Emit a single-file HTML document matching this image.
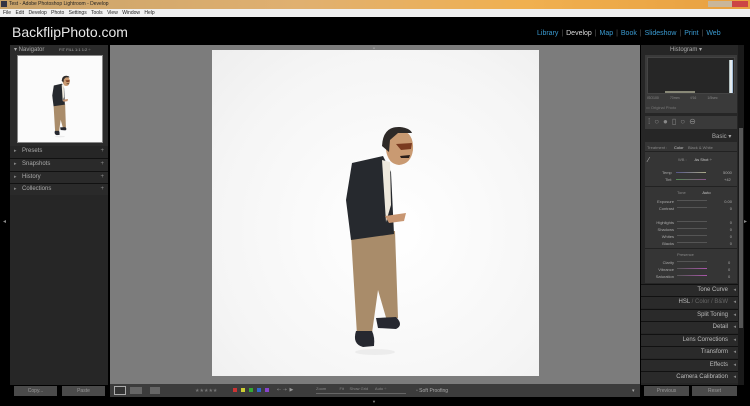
<!DOCTYPE html>
<html><head><style>
*{margin:0;padding:0;box-sizing:border-box}
body{width:750px;height:406px;overflow:hidden;background:#000;font-family:"Liberation Sans",sans-serif;position:relative}
.a{position:absolute}
.t{font-size:5px;color:#aaa;white-space:nowrap}
.rh{position:absolute;left:641px;width:97px;height:12px;background:#2a2a2a;border-top:1px solid #111;font-size:6px;color:#bbb;text-align:right;padding-right:10px;line-height:11px}
.rh:after{content:"◂";position:absolute;right:2px;color:#888;font-size:5px}
.lh{position:absolute;left:10px;width:98px;height:12px;background:#2a2a2a;border-top:1px solid #111;font-size:6px;color:#aaa;line-height:11px;padding-left:12px}
.lh:before{content:"▸";position:absolute;left:4px;color:#888;font-size:5px}
.lh:after{content:"+";position:absolute;right:4px;color:#888;font-size:6px}
.sl{position:absolute;height:1px;background:#555;width:30px}
</style></head><body>
<svg width="0" height="0" style="position:absolute"><defs>
<g id="fig">
<ellipse cx="375" cy="352" rx="20" ry="3" fill="#ececec"/>
<path d="M351 235 L395 231 L398 318 L387 321 L378 290 L372 333 L357 335 Z" fill="#a98c6a"/>
<path d="M352 163 L383 156 L391 172 L394 234 L351 240 L346 200 Z" fill="#26292e"/>
<path d="M382 160 L390 162 L391 205 L386 222 Z" fill="#eee9dd"/>
<path d="M385 216 L406 213 L404 221 L389 223 Z" fill="#c89672"/>
<path d="M386 150 Q387 130 400 130 Q414 132 413 150 Q411 164 399 165 Q388 164 386 150 Z" fill="#c99a72"/>
<path d="M382 146 Q383 126 400 127 Q410 128 412 133 L398 133 L390 140 L389 152 Z" fill="#2e2a28"/>
<path d="M396 144 L412 143 L411 149 L401 150 Z" fill="#7a3a20"/>
<path d="M400 156 L410 155 L409 158 L401 158 Z" fill="#2a1f1a"/>
<path d="M356 331 Q352 344 363 347 L374 346 Q375 337 372 331 Z" fill="#262830"/>
<path d="M376 318 L396 317 Q404 325 396 329 L378 328 Z" fill="#262830"/>
</g></defs></svg>
<div class="a" style="left:0;top:0;width:750px;height:9px;background:linear-gradient(90deg,#c9a36a,#e0b070 40%,#f0b050 70%,#e8a040)"></div>
<div class="a t" style="left:9px;top:1px;color:#222;font-size:5px">Test - Adobe Photoshop Lightroom - Develop</div>
<div class="a" style="left:1px;top:1px;width:6px;height:6px;background:#334"></div>
<div class="a" style="left:708px;top:1px;width:40px;height:6px;background:linear-gradient(90deg,#c9b69a 60%,#c44 60%)"></div>
<div class="a" style="left:0;top:9px;width:750px;height:8px;background:#f0f0f0"></div>
<div class="a t" style="left:3px;top:10px;color:#222;word-spacing:3px">File Edit Develop Photo Settings Tools View Window Help</div>
<div class="a" style="left:0;top:17px;width:750px;height:28px;background:#000"></div>
<div class="a" style="left:12px;top:24px;font-size:14px;color:#e8e8e8">BackflipPhoto.com</div>
<div class="a" style="left:537px;top:30px;font-size:7px;color:#3a9ad0;white-space:nowrap;word-spacing:1px">Library <span style="color:#555">|</span> <span style="color:#ddd">Develop</span> <span style="color:#555">|</span> Map <span style="color:#555">|</span> Book <span style="color:#555">|</span> Slideshow <span style="color:#555">|</span> Print <span style="color:#555">|</span> Web</div>

<div class="a" style="left:10px;top:45px;width:98px;height:340px;background:#2b2b2b"></div>
<div class="a t" style="left:14px;top:46px;font-size:6px">▾ Navigator <span style="margin-left:13px;font-size:4px">FIT FILL 1:1 1:2 ÷</span></div>
<div class="a" style="left:17px;top:55px;width:86px;height:88px;background:#fbfbfb;border:1px solid #888"></div>
<svg class="a" style="left:17px;top:55px" width="86" height="88" viewBox="212 50 327 326" preserveAspectRatio="none"><use href="#fig"/></svg>
<div class="lh" style="top:146px;border:none;background:#262626">Presets</div>
<div class="lh" style="top:158px">Snapshots</div>
<div class="lh" style="top:171px">History</div>
<div class="lh" style="top:183px">Collections</div>
<div class="a" style="left:10px;top:195px;width:98px;height:190px;background:#262626"></div>
<div class="a" style="left:3px;top:218px;color:#888;font-size:6px">◂</div>
<div class="a" style="left:14px;top:386px;width:43px;height:10px;background:#4a4a4a;font-size:5px;color:#999;text-align:center;line-height:10px">Copy...</div>
<div class="a" style="left:62px;top:386px;width:43px;height:10px;background:#4a4a4a;font-size:5px;color:#999;text-align:center;line-height:10px">Paste</div>

<div class="a" style="left:110px;top:45px;width:530px;height:339px;background:#7c7c7c"></div>
<div class="a" style="left:212px;top:50px;width:327px;height:326px;background:radial-gradient(ellipse at 55% 55%,#fff,#f5f5f5 70%,#eeeeee)"></div>
<svg class="a" style="left:212px;top:50px" width="327" height="326" viewBox="212 50 327 326"><use href="#fig"/></svg>
<div class="a" style="left:372px;top:45px;color:#999;font-size:4px">▲</div>

<div class="a" style="left:110px;top:384px;width:530px;height:13px;background:#3c3c3c"></div>
<div class="a" style="left:114px;top:386px;width:12px;height:9px;border:1px solid #aaa;background:#333"></div>
<div class="a" style="left:130px;top:387px;width:12px;height:7px;background:#666"></div>
<div class="a" style="left:150px;top:387px;width:10px;height:7px;background:#666"></div>
<div class="a t" style="left:195px;top:388px;color:#777">★★★★★</div>
<div class="a" style="left:233px;top:388px;width:4px;height:4px;background:#c33"></div>
<div class="a" style="left:241px;top:388px;width:4px;height:4px;background:#cc3"></div>
<div class="a" style="left:249px;top:388px;width:4px;height:4px;background:#3a3"></div>
<div class="a" style="left:257px;top:388px;width:4px;height:4px;background:#36c"></div>
<div class="a" style="left:265px;top:388px;width:4px;height:4px;background:#84c"></div>
<div class="a t" style="left:277px;top:387px;color:#999">⇠ ⇢ &nbsp;▶</div>
<div class="a t" style="left:316px;top:386px;font-size:4px;color:#888">Zoom &nbsp;&nbsp;&nbsp;&nbsp;&nbsp;&nbsp;&nbsp;&nbsp;&nbsp;&nbsp;&nbsp;Fit &nbsp;&nbsp;&nbsp;&nbsp;Show Grid &nbsp;&nbsp;&nbsp;&nbsp;&nbsp;Auto ÷</div>
<div class="a" style="left:316px;top:393px;width:90px;height:1px;background:#666"></div>
<div class="a t" style="left:416px;top:388px;color:#aaa">▫ Soft Proofing</div>
<div class="a t" style="left:632px;top:388px;color:#aaa">▾</div>

<div class="a" style="left:641px;top:45px;width:97px;height:340px;background:#262626"></div>
<div class="a" style="left:738px;top:45px;width:6px;height:340px;background:#1a1a1a"></div>
<div class="a" style="left:739px;top:128px;width:4px;height:200px;background:#555"></div>
<div class="a t" style="left:670px;top:46px;font-size:6px;color:#aaa">Histogram ▾</div>
<div class="a" style="left:645px;top:55px;width:92px;height:58px;background:#3a3a3a"></div>
<div class="a" style="left:647px;top:57px;width:88px;height:37px;background:#262626;border:1px solid #444"></div>
<div class="a" style="left:729px;top:60px;width:4px;height:33px;background:linear-gradient(90deg,#9aa,#fff,#8ac)"></div>
<div class="a" style="left:665px;top:91px;width:30px;height:2px;background:#887"></div>
<div class="a t" style="left:647px;top:96px;font-size:3.5px;color:#888;word-spacing:10px">ISO100 70mm f/16 1/5sec</div>
<div class="a t" style="left:646px;top:105px;font-size:4px;color:#777">▭ Original Photo</div>
<div class="a" style="left:645px;top:116px;width:92px;height:13px;background:#3a3a3a"></div>
<div class="a t" style="left:648px;top:117px;color:#888;font-size:8px;letter-spacing:4px">⁞○●▯○⊖</div>
<div class="a t" style="left:712px;top:133px;font-size:6px;color:#aaa">Basic ▾</div>
<div class="a" style="left:645px;top:142px;width:92px;height:141px;background:#353535"></div>
<div class="a t" style="left:647px;top:145px;font-size:4px;color:#888">Treatment : &nbsp;&nbsp;&nbsp;&nbsp;&nbsp;<span style="color:#ccc">Color</span> &nbsp;&nbsp;&nbsp;Black &amp; White</div>
<div class="a" style="left:645px;top:151px;width:92px;height:1px;background:#222"></div>
<div class="a t" style="left:648px;top:157px;color:#bbb;font-size:7px">⁄</div>
<div class="a t" style="left:678px;top:157px;font-size:4px;color:#888">WB : &nbsp;&nbsp;&nbsp;&nbsp;&nbsp;&nbsp;<span style="color:#ccc">As Shot ÷</span></div>
<div class="a t" style="left:662px;top:170px;font-size:4px">Temp</div><div class="sl" style="left:676px;top:172px;background:linear-gradient(90deg,#558,#aa8)"></div><div class="a t" style="left:723px;top:170px;font-size:4px">5000</div>
<div class="a t" style="left:665px;top:177px;font-size:4px">Tint</div><div class="sl" style="left:676px;top:179px;background:linear-gradient(90deg,#585,#858)"></div><div class="a t" style="left:724px;top:177px;font-size:4px">+42</div>
<div class="a" style="left:645px;top:186px;width:92px;height:1px;background:#222"></div>
<div class="a t" style="left:677px;top:190px;font-size:4px;color:#888">Tone &nbsp;&nbsp;&nbsp;&nbsp;&nbsp;&nbsp;&nbsp;&nbsp;&nbsp;&nbsp;&nbsp;&nbsp;&nbsp;&nbsp;<span style="color:#ccc">Auto</span></div>
<div class="a t" style="left:654px;top:198px;font-size:4px;line-height:7px;text-align:right;width:20px">Exposure<br>Contrast<br><br>Highlights<br>Shadows<br>Whites<br>Blacks</div>
<div class="sl" style="left:677px;top:200px"></div><div class="sl" style="left:677px;top:207px"></div><div class="sl" style="left:677px;top:221px"></div><div class="sl" style="left:677px;top:228px"></div><div class="sl" style="left:677px;top:235px"></div><div class="sl" style="left:677px;top:242px"></div>
<div class="a t" style="left:722px;top:198px;font-size:4px;line-height:7px;text-align:right;width:10px">0.00<br>0<br><br>0<br>0<br>0<br>0</div>
<div class="a" style="left:645px;top:248px;width:92px;height:1px;background:#222"></div>
<div class="a t" style="left:677px;top:252px;font-size:4px;color:#888">Presence</div>
<div class="a t" style="left:654px;top:259px;font-size:4px;line-height:7px;text-align:right;width:20px">Clarity<br>Vibrance<br>Saturation</div>
<div class="sl" style="left:677px;top:261px"></div><div class="sl" style="left:677px;top:268px;background:linear-gradient(90deg,#555,#a5a)"></div><div class="sl" style="left:677px;top:275px;background:linear-gradient(90deg,#555,#a5a)"></div>
<div class="a t" style="left:728px;top:259px;font-size:4px;line-height:7px">0<br>0<br>0</div>
<div class="rh" style="top:284px">Tone Curve</div>
<div class="rh" style="top:296px">HSL <span style="color:#666">/ Color / B&amp;W</span></div>
<div class="rh" style="top:309px">Split Toning</div>
<div class="rh" style="top:321px">Detail</div>
<div class="rh" style="top:334px">Lens Corrections</div>
<div class="rh" style="top:346px">Transform</div>
<div class="rh" style="top:359px">Effects</div>
<div class="rh" style="top:371px">Camera Calibration</div>
<div class="a" style="left:644px;top:386px;width:45px;height:10px;background:#4a4a4a;font-size:5px;color:#999;text-align:center;line-height:10px">Previous</div>
<div class="a" style="left:692px;top:386px;width:45px;height:10px;background:#4a4a4a;font-size:5px;color:#999;text-align:center;line-height:10px">Reset</div>
<div class="a" style="left:744px;top:218px;color:#888;font-size:6px">▸</div>
<div class="a" style="left:372px;top:399px;color:#888;font-size:4px">▼</div>
</body></html>
